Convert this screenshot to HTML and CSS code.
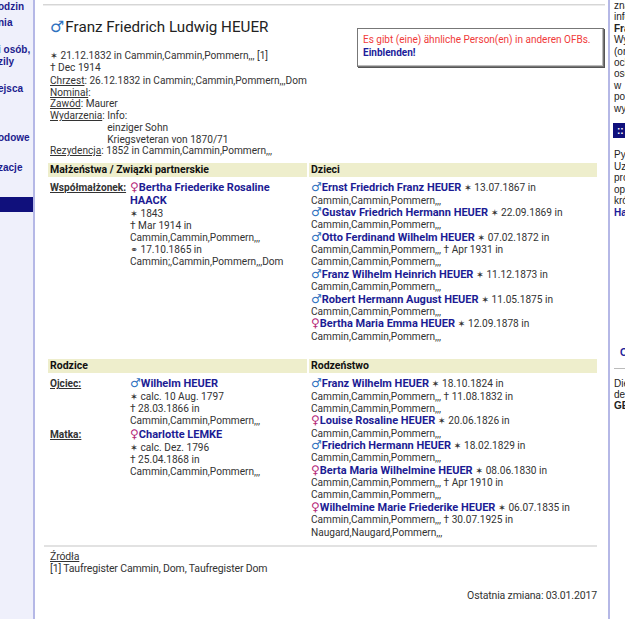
FILE: index.html
```html
<!DOCTYPE html>
<html lang="pl">
<head>
    <meta charset="UTF-8">
    <title>Franz Friedrich Ludwig HEUER</title>
    <link rel="stylesheet" href="styles.css">
</head>
<body>
<div class="page">

    <div class="leftnav">
        <a class="navitem first">odzin</a>
        <a class="navitem">nia</a>
        <a class="navitem gap-m">i osób,<br>zily</a>
        <a class="navitem gap-m">ejsca</a>
        <a class="navitem gap-xl">odowe</a>
        <a class="navitem gap-l">zacje</a>
        <div class="navbar"></div>
    </div>

    <div class="main">
        <div class="rule"></div>

        <div class="person">
            <div class="alert">
                <div class="alert-red">Es gibt (eine) ähnliche Person(en) in anderen OFBs.</div>
                <a class="alert-link">Einblenden!</a>
            </div>
            <h1><span class="male">♂</span>Franz Friedrich Ludwig HEUER</h1>

            <div class="vitals">
                <div><span class="sym">✶</span> 21.12.1832 in Cammin,Cammin,Pommern,,, [1]</div>
                <div>† Dec 1914</div>
            </div>

            <div class="facts">
                <div><span class="lbl">Chrzest</span>: 26.12.1832 in Cammin;,Cammin,Pommern,,,Dom</div>
                <div><span class="lbl">Nominał</span>:</div>
                <div><span class="lbl">Zawód</span>: Maurer</div>
                <div class="fact-row">
                    <span><span class="lbl">Wydarzenia</span>:&nbsp;</span>
                    <div>
                        <div>Info:</div>
                        <div>einziger Sohn</div>
                        <div>Kriegsveteran von 1870/71</div>
                    </div>
                </div>
                <div><span class="lbl">Rezydencja</span>: 1852 in Cammin,Cammin,Pommern,,,</div>
            </div>
        </div>

        <div class="family">
            <div class="col">
                <h2>Małżeństwa / Związki partnerskie</h2>
                <div class="rel">
                    <div class="rel-label">Współmałżonek:</div>
                    <div class="rel-value">
                        <a class="name big"><span class="female">♀</span>Bertha Friederike Rosaline HAACK</a>
                        <div class="details">
                            <div><span class="sym">✶</span> 1843</div>
                            <div>† Mar 1914 in Cammin,Cammin,Pommern,,,</div>
                            <div><span class="sym">⚭</span> 17.10.1865 in Cammin;,Cammin,Pommern,,,Dom</div>
                        </div>
                    </div>
                </div>
            </div>
            <div class="col">
                <h2>Dzieci</h2>
                <div class="list">
                    <div><a class="name"><span class="male">♂</span>Ernst Friedrich Franz HEUER</a> <span class="sym">✶</span> 13.07.1867 in Cammin,Cammin,Pommern,,,</div>
                    <div><a class="name"><span class="male">♂</span>Gustav Friedrich Hermann HEUER</a> <span class="sym">✶</span> 22.09.1869 in Cammin,Cammin,Pommern,,,</div>
                    <div><a class="name"><span class="male">♂</span>Otto Ferdinand Wilhelm HEUER</a> <span class="sym">✶</span> 07.02.1872 in Cammin,Cammin,Pommern,,, † Apr 1931 in Cammin,Cammin,Pommern,,,</div>
                    <div><a class="name"><span class="male">♂</span>Franz Wilhelm Heinrich HEUER</a> <span class="sym">✶</span> 11.12.1873 in Cammin,Cammin,Pommern,,,</div>
                    <div><a class="name"><span class="male">♂</span>Robert Hermann August HEUER</a> <span class="sym">✶</span> 11.05.1875 in Cammin,Cammin,Pommern,,,</div>
                    <div><a class="name"><span class="female">♀</span>Bertha Maria Emma HEUER</a> <span class="sym">✶</span> 12.09.1878 in Cammin,Cammin,Pommern,,,</div>
                </div>
            </div>
        </div>

        <div class="family second">
            <div class="col">
                <h2>Rodzice</h2>
                <div class="rel">
                    <div class="rel-label">Ojciec:</div>
                    <div class="rel-value">
                        <a class="name big"><span class="male">♂</span>Wilhelm HEUER</a>
                        <div class="details">
                            <div><span class="sym">✶</span> calc. 10 Aug. 1797</div>
                            <div>† 28.03.1866 in Cammin,Cammin,Pommern,,,</div>
                        </div>
                    </div>
                </div>
                <div class="rel">
                    <div class="rel-label">Matka:</div>
                    <div class="rel-value">
                        <a class="name big"><span class="female">♀</span>Charlotte LEMKE</a>
                        <div class="details">
                            <div><span class="sym">✶</span> calc. Dez. 1796</div>
                            <div>† 25.04.1868 in Cammin,Cammin,Pommern,,,</div>
                        </div>
                    </div>
                </div>
            </div>
            <div class="col">
                <h2>Rodzeństwo</h2>
                <div class="list">
                    <div><a class="name"><span class="male">♂</span>Franz Wilhelm HEUER</a> <span class="sym">✶</span> 18.10.1824 in Cammin,Cammin,Pommern,,, † 11.08.1832 in Cammin,Cammin,Pommern,,,</div>
                    <div><a class="name"><span class="female">♀</span>Louise Rosaline HEUER</a> <span class="sym">✶</span> 20.06.1826 in Cammin,Cammin,Pommern,,,</div>
                    <div><a class="name"><span class="male">♂</span>Friedrich Hermann HEUER</a> <span class="sym">✶</span> 18.02.1829 in Cammin,Cammin,Pommern,,,</div>
                    <div><a class="name"><span class="female">♀</span>Berta Maria Wilhelmine HEUER</a> <span class="sym">✶</span> 08.06.1830 in Cammin,Cammin,Pommern,,, † Apr 1910 in Cammin,Cammin,Pommern,,,</div>
                    <div><a class="name"><span class="female">♀</span>Wilhelmine Marie Friederike HEUER</a> <span class="sym">✶</span> 06.07.1835 in Cammin,Cammin,Pommern,,, † 30.07.1925 in Naugard,Naugard,Pommern,,,</div>
                </div>
            </div>
        </div>

        <div class="sources">
            <div class="lbl">Źródła</div>
            <div>[1] Taufregister Cammin, Dom, Taufregister Dom</div>
        </div>
        <div class="changed">Ostatnia zmiana: 03.01.2017</div>
        <div class="rule bottom"></div>
    </div>

    <div class="rightnav">
        <div class="rn-block">
            <div>znaleźć</div>
            <div>informacje</div>
            <div class="strong">Franz</div>
            <div>Wydarzenia</div>
            <div>(oraz</div>
            <div>ochrona</div>
            <div>osób</div>
            <div>w</div>
            <div>podanych</div>
            <div>wyjątkach</div>
        </div>
        <div class="rn-bar">::</div>
        <div class="rn-block second">
            <div>Pytania</div>
            <div>Uzupełnienia</div>
            <div>proszę</div>
            <div>opisać</div>
            <div>krótko</div>
            <a class="rn-link">Hans</a>
        </div>
        <a class="rn-link lone">OFB</a>
        <div class="rn-rule"></div>
        <div class="rn-block">
            <div>Diese</div>
            <div>der</div>
            <div class="strong">GEDBAS</div>
        </div>
    </div>

</div>
</body>
</html>
```

FILE: styles.css
```css
html, body {
    margin: 0;
    padding: 0;
    overflow: hidden;
}

body {
    font-family: Roboto, "Liberation Sans", sans-serif;
    font-size: 10.15px;
    color: #333;
    background-color: #fff;
}

.page {
    display: flex;
    width: 625px;
    height: 619px;
    overflow: hidden;
}

/* left menu, scrolled so only the word ends show */
.leftnav {
    flex: none;
    width: 33px;
    background-color: #eff0fb;
    border-right: 2px solid #b5b8e6;
    overflow: hidden;
    font-family: "Liberation Sans", Arial, sans-serif;
    font-weight: bold;
    font-size: 10px;
    line-height: 12px;
    color: #1c1c8e;
}

.navitem {
    display: block;
    white-space: nowrap;
    margin-left: -2px;
    margin-top: 4px;
}

.navitem.first { margin-top: 1px; }
.navitem.gap-m { margin-top: 15px; }
.navitem.gap-l { margin-top: 18px; }
.navitem.gap-xl { margin-top: 37px; }

.navbar {
    margin-top: 23px;
    height: 15px;
    background-color: #10107c;
}

/* main column */
.main {
    flex: none;
    width: 573px;
    box-sizing: border-box;
    padding: 4px 3px 0 8px;
}

.rule {
    height: 1px;
    background-color: #d6d6d6;
    border-bottom: 1px solid #ececec;
}

.rule.bottom {
    margin-top: 17px;
    margin-right: -2px;
}

.person {
    padding-left: 7px;
}

.person h1 {
    margin: 12px 0 0;
    font-size: 15.2px;
    line-height: 19px;
    font-weight: normal;
    color: #222;
}

.male, .female {
    font-family: "DejaVu Sans", sans-serif;
    font-weight: normal;
    font-size: 12px;
    line-height: 10px;
}

.male { color: #2f72bf; }
.female { color: #b52a78; }

.person h1 .male {
    font-size: 16px;
    margin-right: 1px;
}

.alert {
    float: right;
    margin: 10px 1px 0 0;
    width: 237px;
    padding: 5px 3px 7px 5px;
    border: 1px solid #777;
    box-shadow: 1px 1px 0 #555, inset -1px -1px 0 #bbb;
    line-height: 12.5px;
    font-size: 10px;
}

.alert-red { color: #f03a3a; }

.alert-link {
    color: #1c1c9a;
    font-weight: bold;
}

.vitals {
    margin-top: 13px;
    line-height: 12px;
}

.sym {
    font-family: "DejaVu Sans", sans-serif;
    font-size: 9.5px;
    line-height: 8px;
}

.facts {
    margin-top: 1px;
    line-height: 11.7px;
}

.fact-row {
    display: flex;
}

.lbl {
    text-decoration: underline;
}

/* relatives tables */
.family {
    display: grid;
    grid-template-columns: 259px 288px;
    column-gap: 2px;
    margin: 6px 0 0 5px;
}

.family.second {
    margin-top: 16px;
}

.family h2 {
    margin: 0 0 5px;
    padding: 0 2px;
    background-color: #eeeecc;
    font-size: 10.5px;
    line-height: 14.5px;
    font-weight: bold;
    color: #111;
}

.rel {
    display: grid;
    grid-template-columns: 80px 177px;
    padding-left: 2px;
    margin: -1px 0 2px;
}

.rel-label {
    font-weight: bold;
    text-decoration: underline;
    line-height: 13px;
}

.name {
    color: #1c1c94;
    font-weight: bold;
    font-size: 11px;
}

.name.big {
    display: block;
    line-height: 13px;
}

.details {
    margin-top: 1px;
    line-height: 12px;
}

.list {
    padding-left: 2px;
    line-height: 12.35px;
}

/* sources */
.sources {
    margin: 6px 8px 0 1px;
    padding: 4px 0 0 6px;
    border-top: 2px solid #e2e2e2;
    font-size: 10.5px;
    letter-spacing: -0.15px;
    line-height: 12px;
}

.changed {
    margin: 14px 8px 0 0;
    text-align: right;
    font-size: 10.5px;
    letter-spacing: -0.15px;
}

/* right sidebar, cut by the window */
.rightnav {
    flex: none;
    width: 200px;
    border-left: 2px solid #b5b8e6;
    padding-left: 4px;
    font-family: "Liberation Sans", Arial, sans-serif;
    font-size: 10px;
    color: #222;
    white-space: nowrap;
}

.rn-block {
    line-height: 11.4px;
}

.rn-block.second {
    margin-top: 11px;
    line-height: 11.6px;
}

.strong { font-weight: bold; }

.rn-bar {
    margin: 9px 0 0 -1px;
    height: 15px;
    line-height: 15px;
    padding-left: 4px;
    background-color: #10107c;
    color: #fff;
    font-weight: bold;
}

.rn-link {
    display: block;
    color: #1c1c9a;
    font-weight: bold;
}

.rn-link.lone {
    margin: 128px 0 0 6px;
}

.rn-rule {
    margin: 10px 0 9px;
    height: 1px;
    background-color: #bbb;
}
```
